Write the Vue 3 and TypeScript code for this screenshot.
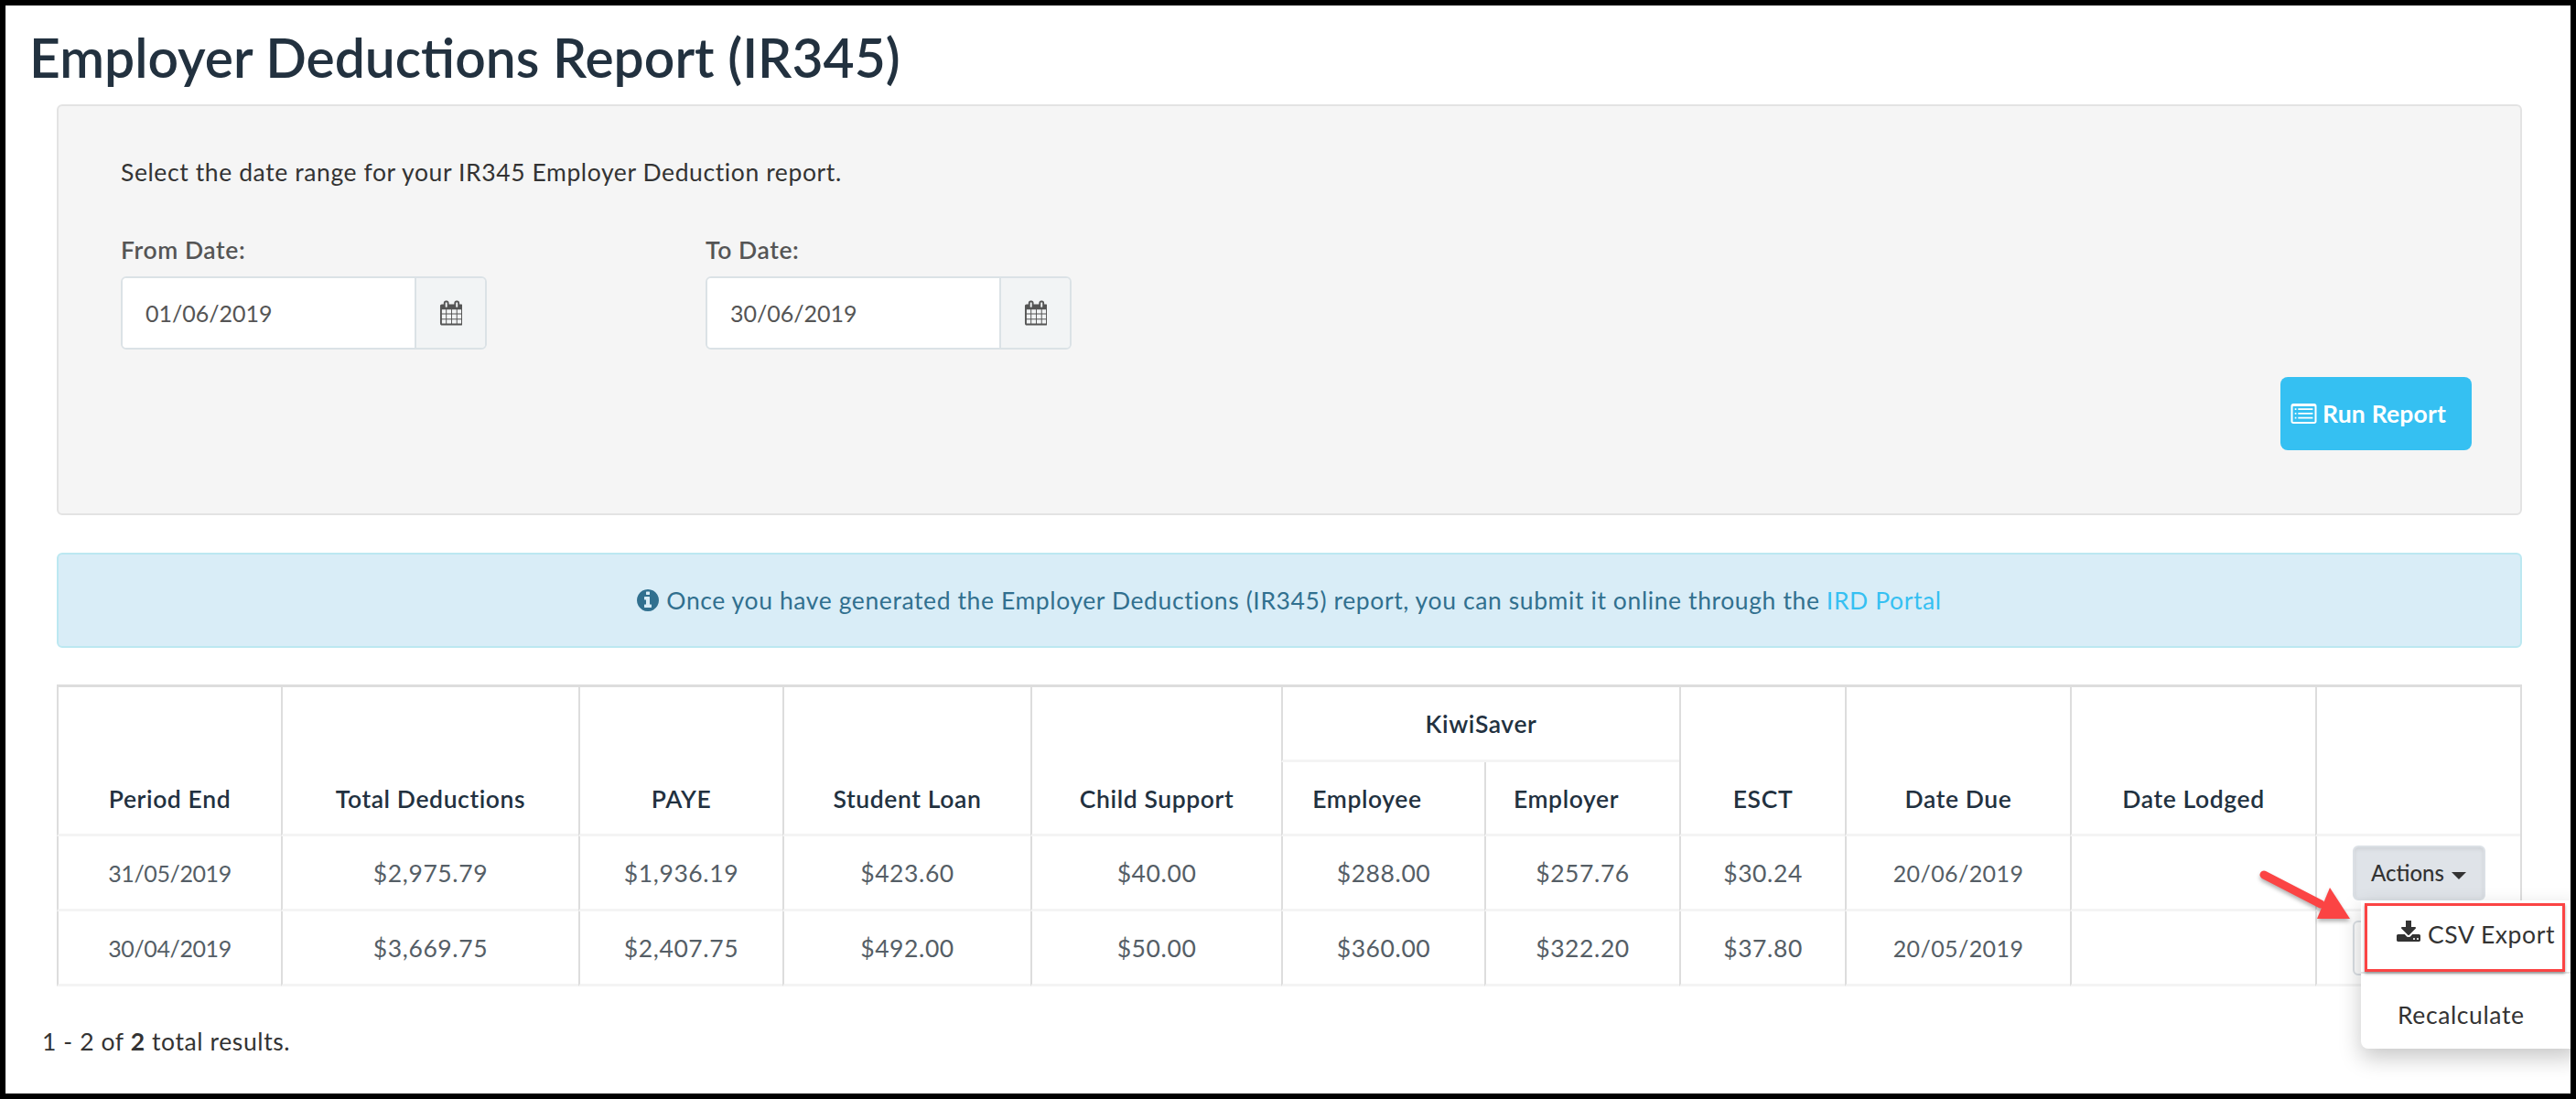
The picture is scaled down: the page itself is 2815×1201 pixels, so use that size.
<script setup lang="ts">
interface Row { end: string; total: string; paye: string; loan: string; child: string; ee: string; er: string; esct: string; due: string }
const rows: Row[] = [
  { end: '31/05/2019', total: '$2,975.79', paye: '$1,936.19', loan: '$423.60', child: '$40.00', ee: '$288.00', er: '$257.76', esct: '$30.24', due: '20/06/2019' },
  { end: '30/04/2019', total: '$3,669.75', paye: '$2,407.75', loan: '$492.00', child: '$50.00', ee: '$360.00', er: '$322.20', esct: '$37.80', due: '20/05/2019' },
]
const widths = [245, 325, 223, 271, 274, 222, 213, 181, 246, 268, 224]
const calendar = 'M192 1664h288v-288h-288v288zm352 0h320v-288h-320v288zm-352-352h288v-320h-288v320zm352 0h320v-320h-320v320zm-352-384h288v-288h-288v288zm736 736h320v-288h-320v288zm-384-736h320v-288h-320v288zm768 736h288v-288h-288v288zm-384-352h320v-320h-320v320zm-352-864v-288q0-13-9.5-22.5t-22.5-9.5h-64q-13 0-22.5 9.5t-9.5 22.5v288q0 13 9.5 22.5t22.5 9.5h64q13 0 22.5-9.5t9.5-22.5zm736 864h288v-320h-288v320zm-384-384h320v-288h-320v288zm384 0h288v-288h-288v288zm32-480v-288q0-13-9.5-22.5t-22.5-9.5h-64q-13 0-22.5 9.5t-9.5 22.5v288q0 13 9.5 22.5t22.5 9.5h64q13 0 22.5-9.5t9.5-22.5zm384-64v1280q0 52-38 90t-90 38h-1408q-52 0-90-38t-38-90v-1280q0-52 38-90t90-38h128v-96q0-66 47-113t113-47h64q66 0 113 47t47 113v96h384v-96q0-66 47-113t113-47h64q66 0 113 47t47 113v96h128q52 0 90 38t38 90z'
const dates = [
  { label: 'From Date:', value: '01/06/2019' },
  { label: 'To Date:', value: '30/06/2019' },
]
</script>

<template>
  <div class="page">
    <h1 class="title">Employer Deductions Report (IR345)</h1>

    <section class="panel">
      <p class="intro">Select the date range for your IR345 Employer Deduction report.</p>
      <div class="fields">
        <div v-for="d in dates" :key="d.label" class="field">
          <label class="label">{{ d.label }}</label>
          <div class="group">
            <span class="input">{{ d.value }}</span>
            <span class="addon">
              <svg class="cal" viewBox="0 0 1664 1792"><path :d="calendar" /></svg>
            </span>
          </div>
        </div>
      </div>
      <div class="run-row">
        <button class="run">
          <svg class="list" viewBox="0 0 1792 1408">
            <path fill-rule="evenodd" d="M160 0h1472q66 0 113 47t47 113v1088q0 66-47 113t-113 47H160q-66 0-113-47T0 1248V160q0-66 47-113T160 0zM160 192q-32 0-32 32v1024q0 32 32 32h1472q32 0 32-32V224q0-32-32-32z" />
            <path d="M270 340h110v110H270zM500 340h1030v110H500zM270 640h110v110H270zM500 640h1030v110H500zM270 940h110v110H270zM500 940h1030v110H500z" />
          </svg>
          Run Report
        </button>
      </div>
    </section>

    <div class="alert">
      <svg class="info" viewBox="128 128 1536 1536"><path d="M1152 1376v-160q0-14-9-23t-23-9h-96v-512q0-14-9-23t-23-9h-320q-14 0-23 9t-9 23v160q0 14 9 23t23 9h96v320h-96q-14 0-23 9t-9 23v160q0 14 9 23t23 9h448q14 0 23-9t9-23zm-128-896v-160q0-14-9-23t-23-9h-192q-14 0-23 9t-9 23v160q0 14 9 23t23 9h192q14 0 23-9t9-23zm640 416q0 209-103 385.5t-279.5 279.5-385.5 103-385.5-103-279.5-279.5-103-385.5 103-385.5 279.5-279.5 385.5-103 385.5 103 279.5 279.5 103 385.5z" /></svg>
      <span>Once you have generated the Employer Deductions (IR345) report, you can submit it online through the <a class="link">IRD Portal</a></span>
    </div>

    <table class="grid">
      <colgroup><col v-for="(w, i) in widths" :key="i" :style="{ width: w + 'px' }" /></colgroup>
      <thead>
        <tr class="head-top">
          <th rowspan="2">Period End</th>
          <th rowspan="2">Total Deductions</th>
          <th rowspan="2">PAYE</th>
          <th rowspan="2">Student Loan</th>
          <th rowspan="2">Child Support</th>
          <th colspan="2" class="group-head">KiwiSaver</th>
          <th rowspan="2">ESCT</th>
          <th rowspan="2">Date Due</th>
          <th rowspan="2">Date Lodged</th>
          <th rowspan="2"></th>
        </tr>
        <tr class="head-sub">
          <th class="sub">Employee</th>
          <th class="sub">Employer</th>
        </tr>
      </thead>
      <tbody>
        <tr v-for="(r, i) in rows" :key="r.end">
          <td class="date">{{ r.end }}</td>
          <td>{{ r.total }}</td>
          <td>{{ r.paye }}</td>
          <td>{{ r.loan }}</td>
          <td>{{ r.child }}</td>
          <td>{{ r.ee }}</td>
          <td>{{ r.er }}</td>
          <td>{{ r.esct }}</td>
          <td class="date due">{{ r.due }}</td>
          <td></td>
          <td class="act-cell">
            <button v-if="i === 0" class="actions open">Actions <span class="caret"></span></button>
            <button v-else class="actions" aria-label="Actions"></button>
          </td>
        </tr>
      </tbody>
    </table>

    <p class="total">1 - 2 of <b>2</b> total results.</p>

    <div class="menu">
      <div class="item">
        <svg class="dl" viewBox="0 128 1792 1408"><path d="M1344 1344q0-26-19-45t-45-19-45 19-19 45 19 45 45 19 45-19 19-45zm256 0q0-26-19-45t-45-19-45 19-19 45 19 45 45 19 45-19 19-45zm128-224v320q0 40-28 68t-68 28h-1472q-40 0-68-28t-28-68v-320q0-40 28-68t68-28h465l135 136q58 56 136 56t136-56l136-136h464q40 0 68 28t28 68zm-325-569q17 41-14 70l-448 448q-18 19-45 19t-45-19l-448-448q-31-29-14-70 17-39 59-39h256v-448q0-26 19-45t45-19h256q26 0 45 19t19 45v448h256q42 0 59 39z" /></svg>
        CSV Export
      </div>
      <div class="divider"></div>
      <div class="item second">Recalculate</div>
      <div class="redbox"></div>
    </div>

    <svg class="arrow" viewBox="0 0 110 60" width="110" height="60">
      <path d="M8 6 L70 38" stroke="#fb4444" stroke-width="9" stroke-linecap="round" fill="none" />
      <path d="M80 20 L102 54 L66 54 Z" fill="#fb4444" />
    </svg>
  </div>
</template>

<style>
html, body { margin: 0; background: #fff; }
</style>

<style scoped>
.page {
  position: relative;
  box-sizing: border-box;
  width: 2815px;
  height: 1201px;
  border: 6px solid #000;
  overflow: hidden;
  background: #fff;
  font-family: Lato, "Open Sans", sans-serif;
  font-size: 26.5px;
  letter-spacing: 0.6px;
  color: #333;
}
.title {
  margin: 0;
  padding: 22px 0 0 26px;
  height: 86px;
  box-sizing: content-box;
  font-size: 58.8px;
  line-height: 70px;
  font-weight: 600;
  letter-spacing: 0;
  color: #22313f;
}
.panel {
  box-sizing: border-box;
  margin: 0 53px 0 56px;
  height: 449px;
  padding: 54px 53px 0 68px;
  background: #f5f5f5;
  border: 2px solid #e3e3e3;
  border-radius: 6px;
}
.intro { margin: 0; line-height: 36px; color: #333; }
.fields { display: flex; gap: 239px; margin-top: 49px; }
.field { width: 400px; }
.label { display: block; line-height: 36px; font-weight: 600; color: #555; margin-bottom: 11px; }
.group {
  display: flex;
  height: 80px;
  box-sizing: border-box;
  border: 2px solid #dbe2e6;
  border-radius: 6px;
  overflow: hidden;
}
.input { flex: 1; background: #fff; padding-left: 25px; line-height: 76px; color: #555; font-size: 25px; letter-spacing: 0; }
.addon { width: 75px; background: #f2f4f5; border-left: 2px solid #dbe2e6; display: flex; align-items: center; justify-content: center; }
.cal { width: 25px; height: 28px; fill: #555; }
.run-row { display: flex; justify-content: flex-end; margin-top: 30px; }
.run {
  width: 209px;
  height: 80px;
  background: #35c0f2;
  border: 0;
  border-radius: 8px;
  color: #fff;
  font: 700 26.5px Lato, sans-serif;
  letter-spacing: 0.2px;
  display: flex;
  align-items: center;
  gap: 6px;
  padding: 0 0 0 11px;
}
.list { width: 29px; height: 22px; fill: #fff; }
.alert {
  box-sizing: border-box;
  margin: 41px 53px 0 56px;
  height: 104px;
  background: #d9edf7;
  border: 2px solid #bce8f1;
  border-radius: 6px;
  color: #31708f;
  display: flex;
  align-items: center;
  justify-content: center;
  gap: 8px;
}
.info { width: 24px; height: 24px; fill: #31708f; }
.link { color: #35c0f2; }
.grid {
  box-sizing: border-box;
  margin: 40px 0 0 56px;
  width: 2694px;
  table-layout: fixed;
  border-collapse: separate;
  border-spacing: 0;
  border-top: 3px solid #ddd;
  border-right: 2px solid #ddd;
}
th, td {
  border-left: 2px solid #ddd;
  text-align: center;
  padding: 0;
}
th { color: #22313f; font-weight: 600; vertical-align: bottom; border-bottom: 3px solid #f4f4f4; padding-bottom: 20px; line-height: 36px; }
.head-top th.group-head { vertical-align: middle; padding: 0; height: 79px; }
.head-sub th { height: 58px; }
th.sub { padding-right: 36px; }
td { color: #555e66; height: 79px; border-bottom: 3px solid #f4f4f4; }
td.date { font-size: 25px; letter-spacing: -0.4px; }
td.due { letter-spacing: 0.4px; }
.act-cell { padding: 0; }
.actions {
  display: block;
  margin: 0 auto;
  box-sizing: border-box;
  width: 145px;
  height: 60px;
  background: #fff;
  border: 2px solid #dbe0e5;
  border-radius: 6px;
  font: 500 24px Lato, sans-serif;
  color: #333;
}
.actions.open { background: #dfe3e8; box-shadow: inset 0 2px 4px rgba(0, 0, 0, 0.08); }
.caret {
  display: inline-block;
  width: 0;
  height: 0;
  margin-left: 2px;
  vertical-align: middle;
  border-top: 8px solid #333;
  border-left: 8px solid transparent;
  border-right: 8px solid transparent;
}
.total { margin: 0; position: absolute; left: 40px; top: 1114px; line-height: 36px; color: #333; }
.total b { font-weight: 700; }
.menu {
  position: absolute;
  left: 2574px;
  top: 978px;
  width: 240px;
  height: 162px;
  background: #fff;
  border-radius: 0 0 8px 8px;
  box-shadow: 0 10px 24px rgba(0, 0, 0, 0.22);
}
.item { display: flex; align-items: center; gap: 7px; padding-left: 40px; height: 74px; color: #333; }
.second { height: 84px; padding-top: 6px; box-sizing: border-box; }
.divider { height: 2px; background: #e5e5e5; margin-top: 4px; }
.dl { width: 28px; height: 24px; fill: #333; margin-left: -2px; margin-bottom: 6px; }
.redbox {
  position: absolute;
  left: 4px;
  top: 3px;
  width: 219px;
  height: 75px;
  box-sizing: border-box;
  border: 3px solid #fb4444;
  box-shadow: 0 2px 3px rgba(0, 0, 0, 0.35);
}
.arrow { position: absolute; left: 2460px; top: 944px; filter: drop-shadow(0 3px 2px rgba(0, 0, 0, 0.3)); }
</style>
